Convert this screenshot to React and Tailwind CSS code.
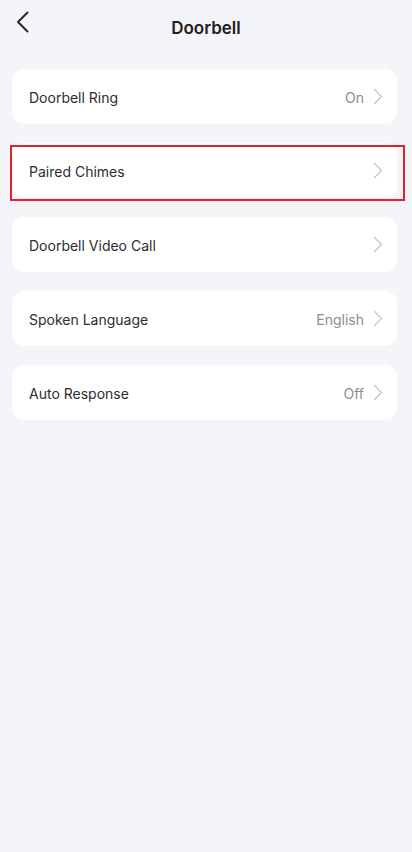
import React from 'react';

const ROWS = [
    { label: 'Doorbell Ring', value: 'On' },
    { label: 'Paired Chimes', value: '', marked: true },
    { label: 'Doorbell Video Call', value: '' },
    { label: 'Spoken Language', value: 'English' },
    { label: 'Auto Response', value: 'Off' },
];

const Chevron = () => (
    <svg width="10" height="17" viewBox="0 0 10 17" fill="none" className="ml-[9px]">
        <path d="M1.5 1.5L8.5 8.5L1.5 15.5" stroke="#c2c4c9" strokeWidth="1.3" strokeLinecap="round" strokeLinejoin="round" />
    </svg>
);

const App = () => {
    return (
        <div className="min-h-[852px] w-[412px] bg-[#f4f5f9] font-['Inter','Noto_Sans',sans-serif]">
            {/* Header */}
            <div className="relative flex h-[56px] items-center justify-center pt-[2px]">
                <button className="absolute left-[12px] top-[7px] p-1">
                    <svg width="14" height="22" viewBox="0 0 14 22" fill="none">
                        <path d="M11.5 1.5L2 11L11.5 20.5" stroke="#222" strokeWidth="1.8" strokeLinecap="round" strokeLinejoin="round" />
                    </svg>
                </button>
                <h1 className="text-[17px] font-semibold text-[#1f2124]">Doorbell</h1>
            </div>

            {/* Settings list */}
            <div className="mt-[13px] flex flex-col gap-[19px] px-[12px] pr-[15px]">
                {ROWS.map(row => (
                    <div key={row.label} className="relative">
                        <div className="flex h-[55px] items-center justify-between rounded-[12px] bg-white pl-[17px] pr-[14px]">
                            <span className="pt-[1px] text-[14px] text-[#2b2d31]">{row.label}</span>
                            <div className="flex items-center">
                                {row.value && <span className="pt-[1px] text-[14px] text-[#8a8c91]">{row.value}</span>}
                                <Chevron />
                            </div>
                        </div>
                        {row.marked && (
                            <div className="pointer-events-none absolute -left-[2px] -right-[8px] top-[2px] -bottom-[3px] border-2 border-[#e3202c]" />
                        )}
                    </div>
                ))}
            </div>
        </div>
    );
};

export default App;
